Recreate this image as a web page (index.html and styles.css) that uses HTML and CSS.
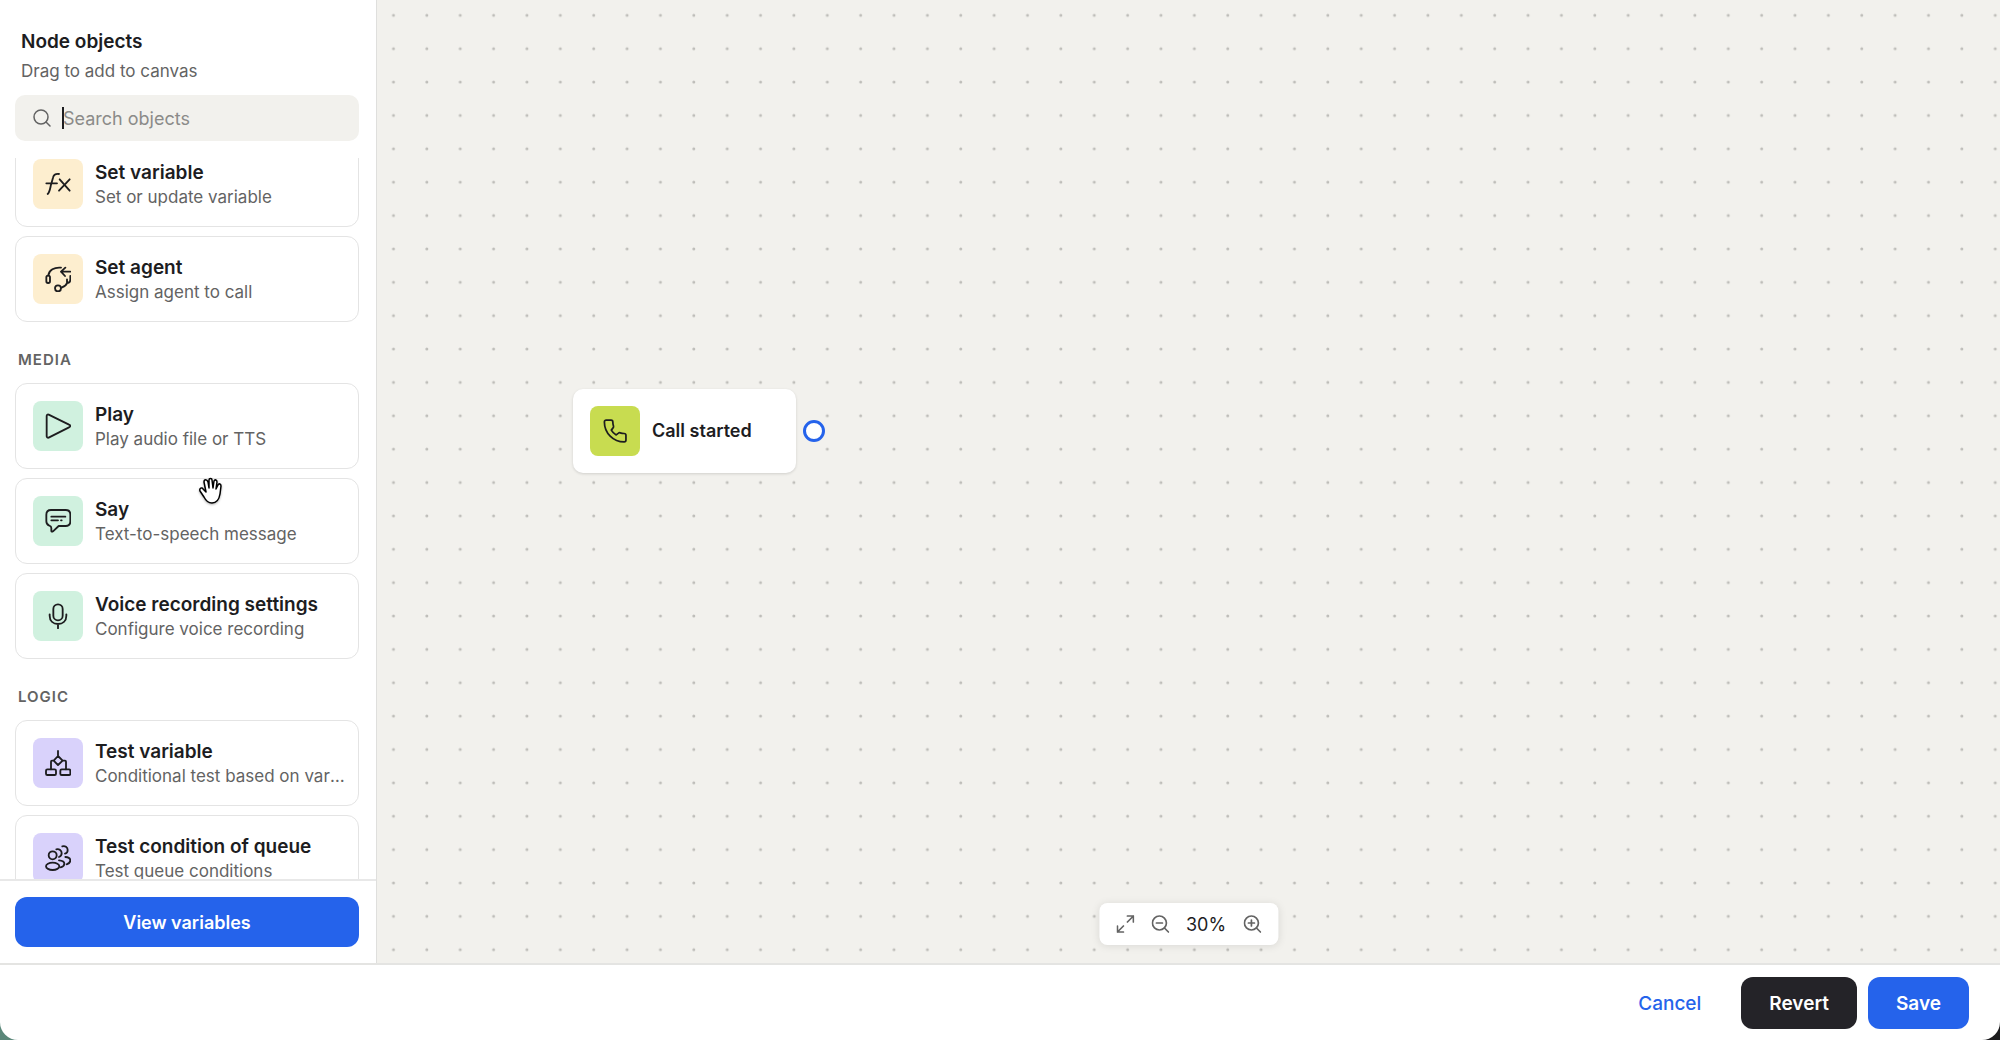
FILE: index.html
```html
<!DOCTYPE html>
<html lang="en">
<head>
  <meta charset="UTF-8" />
  <meta name="viewport" content="width=device-width, initial-scale=1.0"/>
  <title>Call flow editor</title>
  <link rel="stylesheet" href="styles.css">
</head>
<body>
  <div class="app">
    <div class="workspace">
      <aside class="sidebar">
        <div class="sidebar-header">
          <h2>Node objects</h2>
          <p>Drag to add to canvas</p>
        </div>

        <div class="search">
          <svg class="search-icon" viewBox="0 0 18 18" aria-hidden="true"><circle cx="8" cy="8" r="7"/><path d="M13 13l4 4"/></svg>
          <span class="caret"></span>
          <input type="text" placeholder="Search objects" aria-label="Search objects">
        </div>

        <div class="node-list" id="nodeList">
          <ul>
            <li class="node-card" draggable="true">
              <span class="tile yellow"><svg viewBox="0 0 78 78"><path d="M8 69C14 64 15 54 18 41L24 20C26 11 32 8 42 9M4 37H36M44 25L74 59M74 25L42 59"/></svg></span>
              <div class="node-text"><h4>Set variable</h4><p>Set or update variable</p></div>
            </li>
            <li class="node-card" draggable="true">
              <span class="tile yellow"><svg viewBox="0 0 78 78"><rect x="4" y="29" width="11" height="22" rx="5"/><path d="M10 28C12 12 28 3 48 5M76 17H48M61 5L48 17L60 30M76 30V40C76 47 72 51 66 51V40M66 51C64 59 58 61 49 65"/><circle cx="39" cy="67" r="9"/></svg></span>
              <div class="node-text"><h4>Set agent</h4><p>Assign agent to call</p></div>
            </li>
          </ul>

          <h3>MEDIA</h3>
          <ul>
            <li class="node-card" draggable="true">
              <span class="tile green"><svg viewBox="0 0 78 78"><path d="M5 9C5 5 8 4 11 5L72 35C77 37 77 41 72 43L11 74C8 75 5 73 5 70Z"/></svg></span>
              <div class="node-text"><h4>Play</h4><p>Play audio file or TTS</p></div>
            </li>
            <li class="node-card" draggable="true">
              <span class="tile green"><svg viewBox="0 0 78 78"><path d="M18 6H62C71 6 76 12 76 20V40C76 49 71 54 62 54H41L24 70C21 72 19 71 19 68V60C19 56 17 54 13 53C7 51 4 47 4 40V20C4 12 9 6 18 6ZM19 26H61M19 37H39M48 37H50"/></svg></span>
              <div class="node-text"><h4>Say</h4><p>Text-to-speech message</p></div>
            </li>
            <li class="node-card" draggable="true">
              <span class="tile green"><svg viewBox="0 0 78 78"><rect x="25" y="4" width="28" height="48" rx="14"/><path d="M14 34V38C14 54 25 63 39 63S64 54 64 38V34M39 63V76"/></svg></span>
              <div class="node-text"><h4>Voice recording settings</h4><p>Configure voice recording</p></div>
            </li>
          </ul>

          <h3>LOGIC</h3>
          <ul>
            <li class="node-card" draggable="true">
              <span class="tile purple"><svg viewBox="0 0 78 78"><path d="M39 3V18L53 32L39 45L26 32L39 18M26 32H21Q18 32 18 35V58M53 32H60Q63 32 63 35V58"/><rect x="3" y="58" width="30" height="17" rx="4"/><rect x="46" y="58" width="30" height="17" rx="4"/></svg></span>
              <div class="node-text"><h4>Test variable</h4><p>Conditional test based on variable</p></div>
            </li>
            <li class="node-card" draggable="true">
              <span class="tile purple"><svg viewBox="0 0 78 78"><circle cx="23" cy="31" r="12"/><ellipse cx="23" cy="64" rx="20" ry="11"/><path d="M34 13C43 11 50 17 50 24C50 30 47 34 42 36M52 4C60 1 68 7 68 15C68 21 65 25 60 26M42 46C52 47 58 51 58 56C58 61 54 65 47 67M61 36C70 37 76 41 76 46C76 52 71 56 65 58"/></svg></span>
              <div class="node-text"><h4>Test condition of queue</h4><p>Test queue conditions</p></div>
            </li>
          </ul>
        </div>

        <div class="sidebar-footer">
          <button type="button" class="btn btn-wide">View variables</button>
        </div>

        <svg class="hand" viewBox="0 0 24 28" aria-hidden="true"><path d="M8 15L6 5C6 2 9 2 10 5L11 11V3C11 1 14 1 14 3L15 11L16 4C17 2 19 3 19 5L18 12L20 8C21 6 23 7 23 9L22 17C21 23 18 26 14 26C10 26 8 24 6 20L2 14C1 11 4 10 5 12L8 15Z"/></svg>
      </aside>

      <main class="canvas">
        <svg class="grid" aria-hidden="true">
          <defs>
            <pattern id="dots" x="0" y="-1.35" width="33.37" height="33.37" patternUnits="userSpaceOnUse">
              <circle cx="16.5" cy="16.7" r="1.5"/>
            </pattern>
          </defs>
          <rect width="100%" height="100%" fill="url(#dots)"/>
        </svg>

        <div class="flow-node">
          <span class="tile lime"><svg class="phone" viewBox="0 0 24 24"><path d="M2.2 3.6C2.2 2.7 2.9 2 3.8 2H8.4C9.3 2 10 2.7 10 3.6C10 5 10.2 6.3 10.6 7.5C10.8 8.1 10.6 8.7 10.2 9.1L8.6 11.2C9.7 13.2 11.2 14.6 13.1 15.6L15.2 14C15.7 13.6 16.2 13.5 16.8 13.7C18 14.1 19.2 14.3 20.5 14.3C21.4 14.3 22.1 15 22.1 15.9V20.4C22.1 21.4 21.4 22.1 20.5 22.1C10.4 22.1 2.2 13.8 2.2 3.6Z"/></svg></span>
          <h4>Call started</h4>
          <span class="port"></span>
        </div>

        <div class="zoom-bar">
          <button type="button" aria-label="Fit to screen"><svg viewBox="0 0 18 18"><path d="M11 7L17 1M11 1H17V7M7 11L1 17M1 11V17H7"/></svg></button>
          <button type="button" aria-label="Zoom out"><svg viewBox="0 0 18 18"><circle cx="8" cy="8" r="7"/><path d="M13 13l4 4M5 8h6"/></svg></button>
          <span>30%</span>
          <button type="button" aria-label="Zoom in"><svg viewBox="0 0 18 18"><circle cx="8" cy="8" r="7"/><path d="M13 13l4 4M5 8h6M8 5v6"/></svg></button>
        </div>
      </main>
    </div>

    <footer class="actions">
      <button type="button" class="btn btn-link">Cancel</button>
      <button type="button" class="btn btn-dark">Revert</button>
      <button type="button" class="btn">Save</button>
    </footer>
  </div>

  <script>
    document.getElementById('nodeList').scrollTop = 17;
  </script>
</body>
</html>
```

FILE: styles.css
```css
* {
  box-sizing: border-box;
}
body {
  margin: 0;
  font-family: Inter, "Liberation Sans", sans-serif;
  color: #1d1d1f;
  background: linear-gradient(90deg, #5a8779 50%, #1c1c1e 50%);
}
h2, h3, h4, p, ul {
  margin: 0;
  padding: 0;
}
ul {
  list-style: none;
}
svg {
  display: block;
  fill: none;
  stroke: currentColor;
  stroke-linecap: round;
  stroke-linejoin: round;
}
button {
  font: inherit;
  cursor: pointer;
}
.app {
  display: flex;
  flex-direction: column;
  height: 100vh;
  background: white;
  border-radius: 0 0 18px 18px;
  overflow: hidden;
}
.workspace {
  display: flex;
  flex: 1;
  min-height: 0;
}

/* sidebar */
.sidebar {
  position: relative;
  display: flex;
  flex-direction: column;
  width: 377px;
  flex-shrink: 0;
  border-right: 1px solid #dfdfdd;
}
.sidebar-header {
  padding: 29px 21px 12px;
}
.sidebar-header h2 {
  font-size: 19px;
  font-weight: 600;
  line-height: 26px;
}
.sidebar-header p {
  margin-top: 4px;
  font-size: 17px;
  line-height: 24px;
  color: #636363;
}
.search {
  display: flex;
  align-items: center;
  height: 46px;
  margin: 0 17px 17px 15px;
  padding: 0 18px;
  border-radius: 10px;
  background: #f2f1ed;
}
.search-icon {
  width: 18px;
  height: 18px;
  margin-right: 11px;
  color: #636363;
  stroke-width: 1.5;
}
.caret {
  width: 2px;
  height: 22px;
  margin-right: -1px;
  background: #1d1d1f;
}
.search input {
  flex: 1;
  min-width: 0;
  padding: 0;
  border: 0;
  outline: 0;
  background: none;
  font: inherit;
  font-size: 18px;
}
.search input::placeholder {
  color: #8b8b89;
}
.node-list {
  flex: 1;
  min-height: 0;
  padding: 0 17px 16px 15px;
  overflow-y: auto;
  scrollbar-width: none;
}
.node-list ul {
  display: flex;
  flex-direction: column;
  gap: 9px;
}
.node-list h3 {
  margin: 27px 3px 12px;
  font-size: 15px;
  font-weight: 600;
  line-height: 22px;
  letter-spacing: 1px;
  color: #636363;
}
.node-card {
  display: flex;
  align-items: center;
  gap: 12px;
  padding: 17px 12px 17px 17px;
  border: 1px solid #e4e4e4;
  border-radius: 12px;
  background: white;
  cursor: grab;
}
.tile {
  display: flex;
  align-items: center;
  justify-content: center;
  width: 50px;
  height: 50px;
  flex-shrink: 0;
  border-radius: 8px;
}
.tile svg {
  width: 26px;
  height: 26px;
  stroke-width: 5.5;
}
.tile .phone {
  stroke-width: 1.6;
}
.yellow { background: #fdeecf; }
.green { background: #d0f1df; }
.purple { background: #d9d2fb; }
.lime { background: #c8dc50; }
.node-text {
  min-width: 0;
  padding-top: 2px;
}
.node-text h4 {
  font-size: 19px;
  font-weight: 600;
  line-height: 24px;
}
.node-text p {
  font-size: 17px;
  line-height: 24px;
  color: #636363;
  white-space: nowrap;
  overflow: hidden;
  text-overflow: ellipsis;
}
.sidebar-footer {
  padding: 16px 17px 16px 15px;
  border-top: 2px solid #e8e8e8;
}
.hand {
  position: absolute;
  left: 198px;
  top: 477px;
  width: 24px;
  height: 28px;
  fill: white;
  color: black;
  stroke-width: 1.5;
  filter: drop-shadow(0 1px 1px rgba(0,0,0,0.3));
}

/* canvas */
.canvas {
  position: relative;
  flex: 1;
  background: #f2f1ed;
}
.grid {
  position: absolute;
  width: 100%;
  height: 100%;
}
.grid circle {
  fill: #bebdb9;
  stroke: none;
}
.grid rect {
  stroke: none;
}
.flow-node {
  position: absolute;
  left: 196px;
  top: 389px;
  display: flex;
  align-items: center;
  gap: 12px;
  width: 223px;
  height: 84px;
  padding: 0 17px;
  border-radius: 10px;
  background: white;
  box-shadow: 0 1px 3px rgba(0,0,0,0.14);
}
.flow-node h4 {
  font-size: 18px;
  font-weight: 600;
  line-height: 24px;
}
.port {
  position: absolute;
  right: -29px;
  top: 31px;
  width: 22px;
  height: 22px;
  border: 3px solid #2563eb;
  border-radius: 50%;
  background: white;
}
.zoom-bar {
  position: absolute;
  left: 50%;
  bottom: 18px;
  transform: translateX(-50%);
  display: flex;
  align-items: center;
  height: 42px;
  gap: 17px;
  padding: 0 17px;
  border-radius: 8px;
  background: white;
  box-shadow: 0 1px 8px rgba(0,0,0,0.1);
  font-size: 18px;
}
.zoom-bar button {
  padding: 0;
  border: 0;
  background: none;
  color: #636363;
}
.zoom-bar svg {
  width: 18px;
  height: 18px;
  stroke-width: 1.7;
}

/* buttons */
.btn {
  height: 52px;
  padding: 0 28px;
  border: 0;
  border-radius: 12px;
  background: #2563eb;
  color: white;
  font-size: 19px;
  font-weight: 600;
}
.btn-wide {
  width: 100%;
  height: 50px;
  font-size: 18px;
}
.btn-dark {
  background: #242328;
}
.btn-link {
  padding-right: 29px;
  background: none;
  color: #2563eb;
  font-weight: 500;
}
.actions {
  display: flex;
  justify-content: flex-end;
  gap: 11px;
  padding: 12px 31px 11px;
  border-top: 2px solid #e4e4e2;
}
```
